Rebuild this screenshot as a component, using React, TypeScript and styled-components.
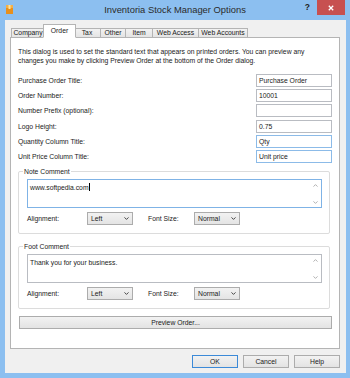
import { Fragment } from 'react'
import styled, { createGlobalStyle } from 'styled-components'

const GlobalStyle = createGlobalStyle`
  html, body {
    margin: 0;
    padding: 0;
    background: #8cbff0;
  }
  * { box-sizing: border-box; }
`

const Window = styled.div`
  width: 350px;
  height: 378px;
  background: #8cbff0;
  display: flex;
  flex-direction: column;
  font-family: 'Liberation Sans', Arial, sans-serif;
  font-size: 6.8px;
  color: #1a1a1a;
  overflow: hidden;
`

const TitleBar = styled.div`
  height: 20px;
  display: grid;
  grid-template-columns: 1fr auto 1fr;
  align-items: start;
`

const TitleLeft = styled.div`
  padding: 5px 0 0 6px;
  display: flex;
`

const Title = styled.div`
  font-size: 9.4px;
  line-height: 20px;
  color: #2b2b2b;
  white-space: nowrap;
`

const TitleRight = styled.div`
  display: flex;
  justify-content: flex-end;
  align-items: flex-start;
  padding-right: 5px;
`

const HelpMark = styled.span`
  font-size: 8.5px;
  font-weight: 700;
  color: #1c1c1c;
  line-height: 15px;
  margin-right: 7px;
`

const CloseButton = styled.div`
  width: 28px;
  height: 15px;
  background: #c75050;
  display: flex;
  align-items: center;
  justify-content: center;
`

const Client = styled.div`
  flex: 1;
  margin: 0 4px 5px 5px;
  background: #f0f0f0;
  display: flex;
  flex-direction: column;
`

const TabStrip = styled.div`
  height: 17px;
  display: flex;
  align-items: flex-end;
  padding-left: 6px;
`

const Tab = styled.div<{ $active?: boolean; $w: number }>`
  position: relative;
  width: ${({ $w, $active }) => ($active ? $w + 4 : $w)}px;
  height: ${({ $active }) => ($active ? 14 : 10)}px;
  margin: 0 ${({ $active }) => ($active ? -2 : 0)}px -1px;
  margin-left: ${({ $active }) => ($active ? -2 : -1)}px;
  z-index: ${({ $active }) => ($active ? 2 : 1)};
  background: ${({ $active }) => ($active ? '#ffffff' : 'linear-gradient(#f2f2f2, #e4e4e4)')};
  border: 1px solid #b4b4b4;
  border-bottom: ${({ $active }) => ($active ? '1px solid #ffffff' : '1px solid #b4b4b4')};
  display: flex;
  align-items: ${({ $active }) => ($active ? 'flex-start' : 'center')};
  padding-top: ${({ $active }) => ($active ? 2 : 0)}px;
  justify-content: center;
  white-space: nowrap;
  line-height: 8px;
  &:first-child { margin-left: 0; }
`

const Panel = styled.div`
  height: 312px;
  margin: 0 6px 0 5px;
  background: #ffffff;
  border: 1px solid #b4b4b4;
  padding: 9px 7px 0 7px;
  display: flex;
  flex-direction: column;
`

const Intro = styled.p`
  margin: 0;
  line-height: 9px;
  height: 18px;
`

const FormGrid = styled.div`
  margin-top: 8.5px;
  display: grid;
  grid-template-columns: 1fr 76px;
  grid-auto-rows: 13px;
  row-gap: 2.4px;
  align-items: center;
`

const Label = styled.span`
  line-height: 9px;
`

const Input = styled.div<{ $hot?: boolean }>`
  height: 13px;
  border: 1px solid ${({ $hot }) => ($hot ? '#8cbbe8' : '#b9bcc2')};
  background: #fff;
  padding: 0 2px;
  line-height: 11px;
  white-space: nowrap;
`

const Group = styled.div<{ $top: number }>`
  position: relative;
  margin: ${({ $top }) => $top}px 2px 0 0;
  border: 1px solid #dcdcdc;
  border-radius: 2px;
  padding: 7px 7px 8px 8px;
  display: flex;
  flex-direction: column;
  gap: 4px;
`

const Legend = styled.span`
  position: absolute;
  top: -5px;
  left: 4px;
  padding: 0 1px;
  background: #fff;
  line-height: 9px;
`

const TextBox = styled.div<{ $focus?: boolean }>`
  height: 29px;
  border: 1px solid ${({ $focus }) => ($focus ? '#7fb3e6' : '#b9bcc2')};
  background: #fff;
  display: flex;
`

const TextContent = styled.div`
  flex: 1;
  padding: 3px 2px;
  line-height: 9px;
`

const Caret = styled.span`
  display: inline-block;
  width: 1px;
  height: 8px;
  background: #000;
  vertical-align: -1px;
`

const ScrollCol = styled.div`
  width: 11px;
  display: flex;
  flex-direction: column;
  justify-content: space-between;
  align-items: center;
  padding: 4px 0 3px;
`

const OptionRow = styled.div`
  display: grid;
  grid-template-columns: 60px 46px 61px 46px;
  align-items: center;
  height: 13px;
`

const OptLabel = styled.span<{ $gap?: number }>`
  margin-left: ${({ $gap }) => $gap ?? 0}px;
  line-height: 9px;
`

const Select = styled.div`
  height: 13px;
  border: 1px solid #acacac;
  background: linear-gradient(#f2f2f2, #e4e4e4);
  display: flex;
  align-items: center;
  justify-content: space-between;
  padding: 0 3px;
  line-height: 9px;
`

const PushButton = styled.div<{ $default?: boolean; $w?: number }>`
  height: 13px;
  width: ${({ $w }) => ($w ? `${$w}px` : 'auto')};
  border: 1px solid ${({ $default }) => ($default ? '#3c8ad8' : '#acacac')};
  background: linear-gradient(#f2f2f2, #e3e3e3);
  display: flex;
  align-items: center;
  justify-content: center;
  line-height: 9px;
`

const PreviewButton = styled(PushButton)`
  margin: 7px 0 0 1px;
`

const ButtonRow = styled.div`
  flex: 1;
  display: flex;
  justify-content: flex-end;
  align-items: flex-start;
  gap: 5px;
  padding: 6px 6px 0 0;
`

function AppIcon() {
  return (
    <svg width="7" height="9" viewBox="0 0 7 9">
      <rect x="0" y="0" width="7" height="9" rx="0.5" fill="#e8901c" />
      <rect x="0" y="0" width="7" height="3" fill="#f3b04a" />
      <rect x="2.5" y="0" width="2" height="4" fill="#fde3a0" />
    </svg>
  )
}

function Chevron({ up, color = '#333' }: { up?: boolean; color?: string }) {
  return (
    <svg width="5" height="3" viewBox="0 0 5 3">
      <path
        d={up ? 'M0.5 2.6 L2.5 0.6 L4.5 2.6' : 'M0.5 0.4 L2.5 2.4 L4.5 0.4'}
        stroke={color}
        strokeWidth="0.9"
        fill="none"
      />
    </svg>
  )
}

const tabs = [
  { label: 'Company', w: 34 },
  { label: 'Order', w: 29, active: true },
  { label: 'Tax', w: 28 },
  { label: 'Other', w: 26 },
  { label: 'Item', w: 28 },
  { label: 'Web Access', w: 47 },
  { label: 'Web Accounts', w: 50 },
]

const fields = [
  { label: 'Purchase Order Title:', value: 'Purchase Order' },
  { label: 'Order Number:', value: '10001' },
  { label: 'Number Prefix (optional):', value: '' },
  { label: 'Logo Height:', value: '0.75' },
  { label: 'Quantity Column Title:', value: 'Qty', hot: true },
  { label: 'Unit Price Column Title:', value: 'Unit price', hot: true },
]

function CommentGroup({ title, text, focus, top }: { title: string; text: string; focus?: boolean; top: number }) {
  return (
    <Group $top={top}>
      <Legend>{title}</Legend>
      <TextBox $focus={focus}>
        <TextContent>
          {text}
          {focus && <Caret />}
        </TextContent>
        <ScrollCol>
          <Chevron up color="#a8a8a8" />
          <Chevron color="#a8a8a8" />
        </ScrollCol>
      </TextBox>
      <OptionRow>
        <OptLabel>Alignment:</OptLabel>
        <Select>
          <span>Left</span>
          <Chevron />
        </Select>
        <OptLabel $gap={15}>Font Size:</OptLabel>
        <Select>
          <span>Normal</span>
          <Chevron />
        </Select>
      </OptionRow>
    </Group>
  )
}

export default function App() {
  return (
    <>
      <GlobalStyle />
      <Window>
        <TitleBar>
          <TitleLeft>
            <AppIcon />
          </TitleLeft>
          <Title>Inventoria Stock Manager Options</Title>
          <TitleRight>
            <HelpMark>?</HelpMark>
            <CloseButton>
              <svg width="6" height="6" viewBox="0 0 6 6">
                <path d="M0.8 0.8 L5.2 5.2 M5.2 0.8 L0.8 5.2" stroke="#fff" strokeWidth="1.3" />
              </svg>
            </CloseButton>
          </TitleRight>
        </TitleBar>

        <Client>
          <TabStrip>
            {tabs.map((t) => (
              <Tab key={t.label} $w={t.w} $active={t.active}>
                {t.label}
              </Tab>
            ))}
          </TabStrip>

          <Panel>
            <Intro>
              This dialog is used to set the standard text that appears on printed orders. You can preview any
              <br />
              changes you make by clicking Preview Order at the bottom of the Order dialog.
            </Intro>

            <FormGrid>
              {fields.map((f) => (
                <Fragment key={f.label}>
                  <Label>{f.label}</Label>
                  <Input $hot={f.hot}>{f.value}</Input>
                </Fragment>
              ))}
            </FormGrid>

            <CommentGroup title="Note Comment" text="www.softpedia.com" focus top={8} />
            <CommentGroup title="Foot Comment" text="Thank you for your business." top={12} />

            <PreviewButton>Preview Order...</PreviewButton>
          </Panel>

          <ButtonRow>
            <PushButton $default $w={46}>OK</PushButton>
            <PushButton $w={46}>Cancel</PushButton>
            <PushButton $w={46}>Help</PushButton>
          </ButtonRow>
        </Client>
      </Window>
    </>
  )
}
